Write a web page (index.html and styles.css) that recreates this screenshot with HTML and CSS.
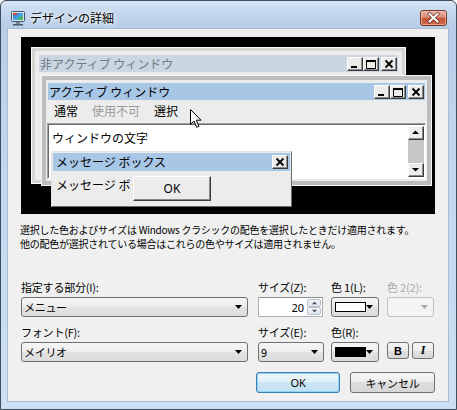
FILE: index.html
```html
<!DOCTYPE html>
<html lang="ja">
<head>
<meta charset="utf-8">
<title>デザインの詳細</title>
<link rel="stylesheet" href="styles.css">
</head>
<body>
<div class="window">
  <div class="titlebar">
    <svg class="app-icon" viewBox="0 0 16 16" width="16" height="16">
      <defs>
        <linearGradient id="scr" x1="0" y1="0" x2="1" y2="1">
          <stop offset="0" stop-color="#2f6fd0"/>
          <stop offset="0.55" stop-color="#47a6e8"/>
          <stop offset="1" stop-color="#3fb04a"/>
        </linearGradient>
      </defs>
      <rect x="1.5" y="1.5" width="13" height="10" rx="1" fill="#dfe6ee" stroke="#40566e"/>
      <rect x="3" y="3" width="10" height="7" fill="url(#scr)"/>
      <rect x="3" y="3" width="4" height="2" fill="#d8413a"/>
      <rect x="9" y="7" width="4" height="3" fill="#48b84a"/>
      <rect x="6" y="12" width="4" height="2" fill="#7a8794"/>
      <rect x="3" y="14" width="10" height="1.5" fill="#4a5866"/>
    </svg>
    <span class="title">デザインの詳細</span>
    <div class="close-btn">
      <svg viewBox="0 0 27 16" width="27" height="16">
        <path d="M9.5 4 L17.5 11.5 M17.5 4 L9.5 11.5" stroke="#6b2a1e" stroke-width="3.4" stroke-linecap="square"/>
        <path d="M9.5 4 L17.5 11.5 M17.5 4 L9.5 11.5" stroke="#ffffff" stroke-width="2" stroke-linecap="square"/>
      </svg>
    </div>
  </div>

  <div class="client">
    <div class="preview">
      <div class="pw pw-inactive">
        <div class="cap cap-inactive">
          <span class="cap-text">非アクティブ ウィンドウ</span>
          <div class="capbtns">
            <div class="cbtn"><svg viewBox="0 0 14 12" width="14" height="12"><rect x="3" y="8" width="6" height="2"/></svg></div>
            <div class="cbtn"><svg viewBox="0 0 14 12" width="14" height="12"><path d="M2.5 2.5 H11.5 V10.5 H2.5 Z" fill="none" stroke="#000"/><rect x="2" y="2" width="10" height="2"/></svg></div>
            <div class="cbtn gap"><svg viewBox="0 0 14 12" width="14" height="12"><path d="M3.5 2.5 L10.5 9.5 M10.5 2.5 L3.5 9.5" stroke="#000" stroke-width="1.8"/></svg></div>
          </div>
        </div>
      </div>

      <div class="pw pw-active">
        <div class="cap cap-active">
          <span class="cap-text">アクティブ ウィンドウ</span>
          <div class="capbtns">
            <div class="cbtn"><svg viewBox="0 0 14 12" width="14" height="12"><rect x="3" y="8" width="6" height="2"/></svg></div>
            <div class="cbtn"><svg viewBox="0 0 14 12" width="14" height="12"><path d="M2.5 2.5 H11.5 V10.5 H2.5 Z" fill="none" stroke="#000"/><rect x="2" y="2" width="10" height="2"/></svg></div>
            <div class="cbtn gap"><svg viewBox="0 0 14 12" width="14" height="12"><path d="M3.5 2.5 L10.5 9.5 M10.5 2.5 L3.5 9.5" stroke="#000" stroke-width="1.8"/></svg></div>
          </div>
        </div>
        <div class="menu">
          <span class="mi">通常</span>
          <span class="mi dis">使用不可</span>
          <span class="mi">選択</span>
        </div>
        <div class="wtextarea">
          <span class="wtext">ウィンドウの文字</span>
          <div class="vscroll">
            <div class="sbtn"><svg viewBox="0 0 13 11" width="13" height="11"><polygon points="3,7 10,7 6.5,3.5"/></svg></div>
            <div class="track"></div>
            <div class="sbtn"><svg viewBox="0 0 13 11" width="13" height="11"><polygon points="3,4 10,4 6.5,7.5"/></svg></div>
          </div>
        </div>
      </div>

      <div class="msgbox">
        <div class="cap cap-active cap-msg">
          <span class="cap-text">メッセージ ボックス</span>
          <div class="capbtns">
            <div class="cbtn"><svg viewBox="0 0 14 12" width="14" height="12"><path d="M3.5 2.5 L10.5 9.5 M10.5 2.5 L3.5 9.5" stroke="#000" stroke-width="1.8"/></svg></div>
          </div>
        </div>
        <div class="msgbody">
          <span class="msgtext">メッセージ ボックス</span>
          <div class="okbtn">OK</div>
        </div>
      </div>

      <svg class="cursor" viewBox="0 0 13 20" width="13" height="20">
        <path d="M0.5 0.5 L0.5 15.5 L4 12 L6.7 18.3 L8.9 17.4 L6.3 11.2 L11 11.2 Z" fill="#fff" stroke="#000" stroke-width="1" stroke-linejoin="miter"/>
      </svg>
    </div>

    <div class="note">
      <span class="note-line">選択した色およびサイズは Windows クラシックの配色を選択したときだけ適用されます。</span>
      <span class="note-line">他の配色が選択されている場合はこれらの色やサイズは適用されません。</span>
    </div>

    <div class="controls">
      <div class="field">
        <label class="lbl">指定する部分(I):</label>
        <div class="combo w-item"><span class="ctext">メニュー</span><svg class="arrow" viewBox="0 0 7 4" width="7" height="4"><polygon points="0,0 7,0 3.5,4"/></svg></div>
      </div>
      <div class="field">
        <label class="lbl">サイズ(Z):</label>
        <div class="spin">
          <span class="spin-val">20</span>
          <div class="spin-btns">
            <div class="sp"><svg viewBox="0 0 7 4" width="7" height="4"><polygon points="0,4 7,4 3.5,0"/></svg></div>
            <div class="sp"><svg viewBox="0 0 7 4" width="7" height="4"><polygon points="0,0 7,0 3.5,4"/></svg></div>
          </div>
        </div>
      </div>
      <div class="field">
        <label class="lbl">色 1(L):</label>
        <div class="combo w-color"><span class="swatch white"></span><svg class="arrow" viewBox="0 0 7 4" width="7" height="4"><polygon points="0,0 7,0 3.5,4"/></svg></div>
      </div>
      <div class="field">
        <label class="lbl dis">色 2(2):</label>
        <div class="combo w-color2 disabled"><svg class="arrow" viewBox="0 0 7 4" width="7" height="4"><polygon points="0,0 7,0 3.5,4"/></svg></div>
      </div>

      <div class="field">
        <label class="lbl">フォント(F):</label>
        <div class="combo w-item"><span class="ctext">メイリオ</span><svg class="arrow" viewBox="0 0 7 4" width="7" height="4"><polygon points="0,0 7,0 3.5,4"/></svg></div>
      </div>
      <div class="field">
        <label class="lbl">サイズ(E):</label>
        <div class="combo w-size"><span class="ctext">9</span><svg class="arrow" viewBox="0 0 7 4" width="7" height="4"><polygon points="0,0 7,0 3.5,4"/></svg></div>
      </div>
      <div class="field">
        <label class="lbl">色(R):</label>
        <div class="combo w-color"><span class="swatch black"></span><svg class="arrow" viewBox="0 0 7 4" width="7" height="4"><polygon points="0,0 7,0 3.5,4"/></svg></div>
      </div>
      <div class="field">
        <span class="lbl">&nbsp;</span>
        <div class="bi">
          <div class="tbtn bold">B</div>
          <div class="tbtn ital">I</div>
        </div>
      </div>
    </div>

    <div class="buttons">
      <div class="btn default">OK</div>
      <div class="btn">キャンセル</div>
    </div>
  </div>
</div>
</body>
</html>
```

FILE: styles.css
```css
html, body {
  margin: 0;
  padding: 0;
  background: #ffffff;
}

body {
  font-family: "Noto Sans CJK JP", "Noto Sans", sans-serif;
  color: #000;
}

.window {
  width: 457px;
  height: 410px;
  box-sizing: border-box;
  border: 1px solid #3f4e5e;
  border-radius: 6px 6px 0 0;
  background: linear-gradient(180deg, #d8e5f4 0px, #c3d7ee 12px, #b7cde8 27px, #c0d5ed 120px, #c8dcf1 300px, #cde0f3 410px);
  padding: 0 7px 7px 6px;
  display: flex;
  flex-direction: column;
  overflow: hidden;
}

.titlebar {
  height: 27px;
  box-sizing: border-box;
  padding-top: 6px;
  display: flex;
  align-items: center;
}

.app-icon {
  margin-left: 3px;
  flex: none;
}

.title {
  margin-left: 4px;
  font-size: 12px;
  line-height: 14px;
  text-shadow: 0 0 6px #ffffff, 0 0 3px #ffffff;
}

.close-btn {
  margin-left: auto;
  margin-right: 2px;
  width: 27px;
  height: 16px;
  box-sizing: border-box;
  border: 1px solid #7a3527;
  border-radius: 3px;
  background: linear-gradient(180deg, #eab3a6 0%, #dc8d7a 45%, #c55336 50%, #cf6a4d 100%);
  box-shadow: inset 0 0 0 1px rgba(255, 220, 210, 0.5);
  overflow: hidden;
}

.close-btn svg {
  display: block;
  margin: -1px 0 0 -1px;
}

.client {
  flex: 1;
  background: #f0f0f0;
  border: 1px solid #a9bcd2;
  padding: 8px 13px 0 13px;
  display: flex;
  flex-direction: column;
}

/* ---------- preview ---------- */
.preview {
  position: relative;
  width: 414px;
  height: 177px;
  background: #000;
  overflow: hidden;
  font-size: 12px;
  line-height: 16px;
}

.pw {
  position: absolute;
  box-sizing: border-box;
  background: #ececec;
}

.pw-inactive {
  left: 10px;
  top: 10px;
  width: 375px;
  height: 137px;
  border: 1px solid #fbfbfb;
  box-shadow: inset 0 0 0 3px #d4d4d4;
  padding: 7px;
}

.pw-active {
  left: 20px;
  top: 38px;
  width: 391px;
  height: 111px;
  border: 1px solid #f6f6f6;
  box-shadow: inset 0 0 0 4px #bdbdbd;
  padding: 7px 6px 6px 6px;
  display: flex;
  flex-direction: column;
}

.cap {
  height: 17px;
  display: flex;
  align-items: center;
  padding-left: 1px;
}

.cap-inactive {
  background: #cad6e2;
  color: #707b86;
}

.cap-active {
  background: #a8c6e6;
  color: #000;
}

.cap-text {
  white-space: nowrap;
}

.capbtns {
  margin-left: auto;
  margin-right: 1px;
  display: flex;
}

.cbtn {
  width: 16px;
  height: 14px;
  box-sizing: border-box;
  background: #ececec;
  border: 1px solid;
  border-color: #ffffff #3c3c3c #3c3c3c #ffffff;
  box-shadow: inset -1px -1px 0 #8a8a8a;
}

.cbtn.gap {
  margin-left: 2px;
}

.cbtn svg {
  display: block;
  fill: #000;
}

.menu {
  height: 21px;
  display: flex;
  align-items: center;
  margin-left: -1px;
}

.mi {
  padding: 0 7px;
}

.mi.dis {
  color: #9a9a9a;
}

.wtextarea {
  margin-top: 2px;
  margin-left: -1px;
  margin-right: -1px;
  height: 56px;
  box-sizing: border-box;
  background: #fff;
  border: 1px solid;
  border-color: #a0a0a0 #ffffff #ffffff #a0a0a0;
  box-shadow: inset 1px 1px 0 #6a6a6a;
  display: flex;
  padding: 2px 1px 1px 4px;
}

.wtext {
  margin-top: 4px;
  flex: 1;
}

.vscroll {
  width: 16px;
  display: flex;
  flex-direction: column;
  background: #c8c8c8;
}

.sbtn {
  width: 16px;
  height: 14px;
  box-sizing: border-box;
  background: #ececec;
  border: 1px solid;
  border-color: #ffffff #3c3c3c #3c3c3c #ffffff;
  box-shadow: inset -1px -1px 0 #8a8a8a;
}

.sbtn svg {
  display: block;
  fill: #000;
}

.track {
  flex: 1;
}

.msgbox {
  position: absolute;
  left: 30px;
  top: 114px;
  width: 241px;
  height: 56px;
  box-sizing: border-box;
  background: #ececec;
  border: 1px solid;
  border-color: #e4e4e4 #6a6a6a #6a6a6a #e4e4e4;
  padding: 1px;
  display: flex;
  flex-direction: column;
}

.cap-msg {
  height: 18px;
  padding-left: 3px;
}

.cap-msg .capbtns {
  margin-right: 2px;
}

.msgbody {
  position: relative;
  flex: 1;
  overflow: hidden;
}

.msgtext {
  position: absolute;
  left: 3px;
  top: 6px;
  width: 77px;
  overflow: hidden;
  white-space: nowrap;
}

.okbtn {
  position: absolute;
  left: 80px;
  top: 5px;
  width: 78px;
  height: 25px;
  box-sizing: border-box;
  background: #ececec;
  border: 1px solid;
  border-color: #ffffff #3c3c3c #3c3c3c #ffffff;
  box-shadow: inset -1px -1px 0 #8a8a8a;
  display: flex;
  align-items: center;
  justify-content: center;
  font-family: "Noto Sans", "Noto Sans CJK JP", sans-serif;
  font-size: 12px;
}

.cursor {
  position: absolute;
  left: 169px;
  top: 72px;
}

/* ---------- note ---------- */
.note {
  margin: 9px 0 0 -1px;
  display: flex;
  flex-direction: column;
  font-size: 10px;
  line-height: 14px;
  letter-spacing: -0.25px;
  white-space: nowrap;
}

.note-line {
  display: block;
}

/* ---------- controls ---------- */
.controls {
  margin-top: 29px;
  display: grid;
  grid-template-columns: 237px 73px 56px 47px;
  row-gap: 8px;
}

.field {
  display: flex;
  flex-direction: column;
  gap: 3px;
  align-items: flex-start;
}

.lbl {
  font-size: 11px;
  line-height: 14px;
  letter-spacing: -0.2px;
  white-space: nowrap;
}

.lbl.dis {
  color: #a8a8a8;
}

.combo {
  height: 20px;
  box-sizing: border-box;
  border: 1px solid #707070;
  border-radius: 3px;
  background: linear-gradient(180deg, #f6f6f6 0%, #ededed 50%, #e3e3e3 50%, #dcdcdc 100%);
  display: flex;
  align-items: center;
  padding: 0 5px 0 2px;
}

.combo .arrow {
  margin-left: auto;
  fill: #000;
  flex: none;
}

.combo.disabled {
  border-color: #c2c2c2;
  background: #f4f4f4;
}

.combo.disabled .arrow {
  fill: #a8a8a8;
}

.ctext {
  font-size: 11px;
  letter-spacing: -0.3px;
  white-space: nowrap;
}

.w-item { width: 227px; }
.w-size { width: 66px; }
.w-color { width: 48px; padding-left: 3px; }
.w-color2 { width: 47px; }

.swatch {
  width: 32px;
  height: 10px;
  box-sizing: border-box;
  border: 1px solid #000;
}

.swatch.white { background: #fff; }
.swatch.black { background: #000; }

.spin {
  width: 65px;
  height: 20px;
  box-sizing: border-box;
  border: 1px solid #abadb3;
  border-top-color: #8e8f8f;
  background: #fff;
  display: flex;
  align-items: center;
}

.spin-val {
  flex: 1;
  text-align: right;
  padding-right: 3px;
  font-size: 11px;
  font-family: "Noto Sans", sans-serif;
}

.spin-btns {
  width: 14px;
  height: 16px;
  margin-right: 1px;
  display: flex;
  flex-direction: column;
}

.sp {
  flex: 1;
  box-sizing: border-box;
  border: 1px solid #b7c2cf;
  border-radius: 2px;
  background: linear-gradient(180deg, #f3f5f8, #dfe4ea);
  display: flex;
  align-items: center;
  justify-content: center;
}

.sp svg {
  fill: #4d5560;
  transform: scale(0.8);
}

.bi {
  display: flex;
  gap: 3px;
}

.tbtn {
  width: 22px;
  height: 17px;
  box-sizing: border-box;
  border: 1px solid #707070;
  border-radius: 3px;
  background: linear-gradient(180deg, #f6f6f6 0%, #ededed 50%, #e0e0e0 50%, #d8d8d8 100%);
  display: flex;
  align-items: center;
  justify-content: center;
  font-size: 11px;
}

.tbtn.bold {
  font-family: "Liberation Sans", sans-serif;
  font-weight: bold;
}

.tbtn.ital {
  font-family: "Liberation Serif", serif;
  font-style: italic;
  font-weight: bold;
  font-size: 12px;
}

/* ---------- buttons ---------- */
.buttons {
  margin-top: 10px;
  display: flex;
  justify-content: flex-end;
  gap: 10px;
}

.btn {
  width: 85px;
  height: 21px;
  box-sizing: border-box;
  border: 1px solid #707070;
  border-radius: 3px;
  background: linear-gradient(180deg, #f6f6f6 0%, #ededed 50%, #dedede 50%, #d6d6d6 100%);
  display: flex;
  align-items: center;
  justify-content: center;
  font-size: 11px;
  letter-spacing: -0.2px;
}

.btn.default {
  width: 84px;
  border-color: #3c7fb1;
  box-shadow: inset 0 0 0 1px #8fd3f6;
  background: linear-gradient(180deg, #eef7fc 0%, #e0eff9 50%, #cbe5f5 50%, #c2e0f4 100%);
  font-family: "Noto Sans", sans-serif;
}
```
